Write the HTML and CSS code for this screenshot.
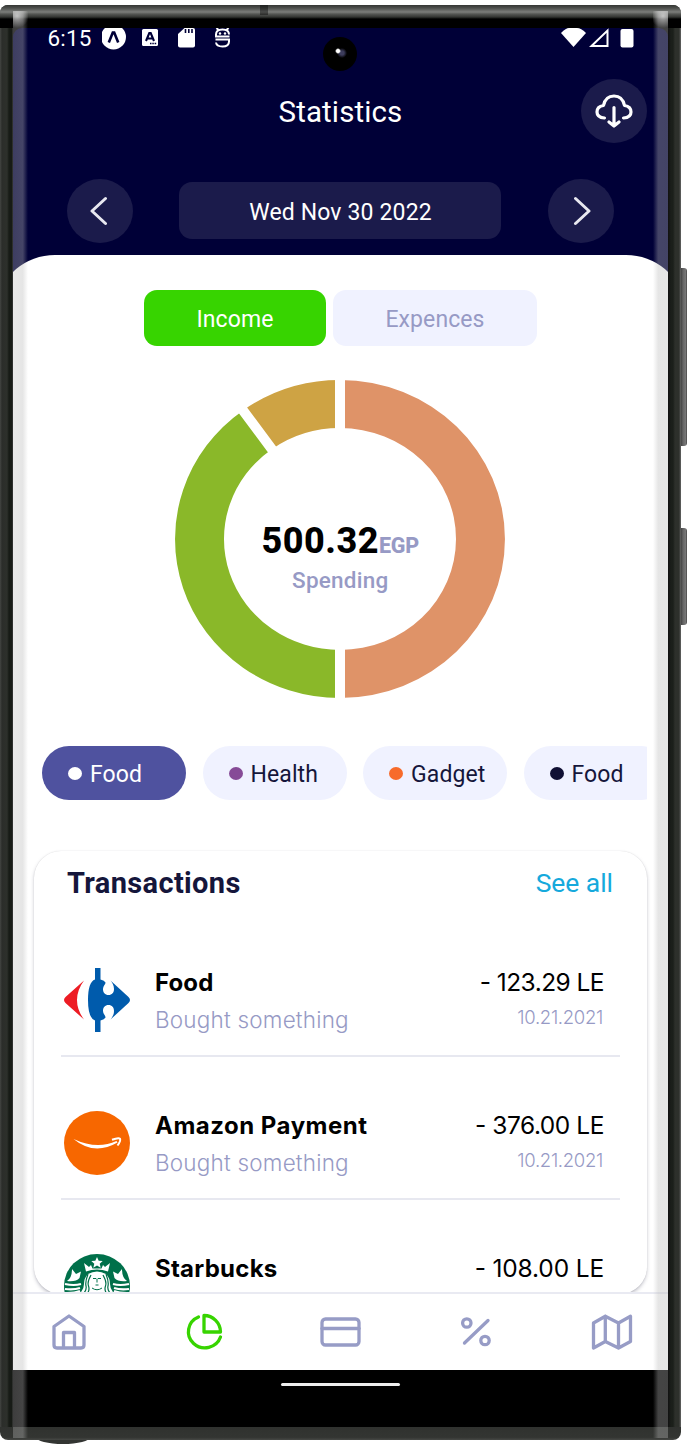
FILE: index.html
```html
<!DOCTYPE html>
<html lang="en">
<head>
<meta charset="utf-8">
<title>Statistics</title>
<link rel="stylesheet" href="styles.css">
</head>
<body>
<div class="stage">
  <span class="side-button volume"></span>
  <span class="side-button power"></span>
  <span class="stylus"></span>
  <div class="phone">
    <div class="top-edge"><span class="antenna"></span></div>
    <div class="screen">
      <header class="header">
        <div class="status">
          <span class="clock">6:15</span>
          <svg class="st-icons" width="130" height="23" viewBox="0 0 130 23">
            <circle cx="11.500" cy="9" r="12.500" fill="#fff"/>
            <path d="M6.800 14.500 10.800 4.500h1.400l4 10" fill="none" stroke="#000037" stroke-width="2.600"/>
            <rect x="40" y="1" width="16" height="17" rx="1.500" fill="#fff"/>
            <path d="M44 13 47.300 5h1.400l3.300 8M45.500 10.500h5" fill="none" stroke="#000037" stroke-width="2.100"/>
            <path d="M48 15.500h7" stroke="#000037" stroke-width="1.400" stroke-dasharray="1.500 .8"/>
            <path d="M82.500 0H91q2 0 2 2v15.500q0 2-2 2H78q-2 0-2-2V6z" fill="#fff"/>
            <path d="M83.500 1v4M86.800 1v4M90 1v4" stroke="#000037" stroke-width="1.600"/>
            <path d="M114.500 0l2 2M126.500 0l-2 2M127.500 8.500H114V6.500q0-5 6.500-5t6.500 5M113.500 11.500H127v2q0 5-6.500 5-6 0-6.500-4" fill="none" stroke="#fff" stroke-width="2"/>
            <circle cx="118" cy="5.500" r="1.200" fill="#fff"/><circle cx="123" cy="5.500" r="1.200" fill="#fff"/>
          </svg>
          <svg class="st-right" width="74" height="20" viewBox="0 0 74 20">
            <path d="M0 5Q5 0 8 0h8q4 0 9 5L12.500 19z" fill="#fff"/>
            <path d="M30.500 18 46.500 2.500V18z" fill="none" stroke="#fff" stroke-width="2"/>
            <rect x="59.500" y="1" width="13" height="18.500" rx="2" fill="#fff"/>
          </svg>
        </div>
        <div class="title-row">
          <h1 class="title">Statistics</h1>
          <button class="round download" aria-label="Download">
            <svg width="38" height="34" viewBox="0 0 38 34" fill="none" stroke="#fff" stroke-width="3.200" stroke-linecap="round" stroke-linejoin="round">
              <path d="M9.500 24Q2 23.500 2 18q0-5.500 6.500-6.500Q10.500 2 19 2t10.500 9.500Q36 12.500 36 18q0 5.500-7.500 6M19 13.500v18M14 28l5 4 5-4"/>
            </svg>
          </button>
        </div>
        <div class="date-row">
          <button class="round" aria-label="Previous day">
            <svg class="chev-left" width="18" height="30" viewBox="0 0 18 30"><path d="M15.500 2.500 2 15l13.500 12.500"/></svg>
          </button>
          <div class="date"><span class="date-text">Wed Nov 30 2022</span></div>
          <button class="round" aria-label="Next day">
            <svg class="chev-right" width="18" height="30" viewBox="0 0 18 30"><path d="M2.500 2.500 16 15 2.500 27.500"/></svg>
          </button>
        </div>
      </header>
      <main class="sheet">
        <div class="toggle">
          <button class="tab tab-on">Income</button>
          <button class="tab">Expences</button>
        </div>
        <div class="chart">
          <svg class="donut" width="330" height="318" viewBox="0 0 330 318" fill="none">
            <path d="M165 0A165 159 0 0 1 165 318V270A116 111 0 0 0 165 48z" fill="#df9368"/>
            <path d="M165 318A165 159 0 0 1 68 30.400L96.800 69.200A116 111 0 0 0 165 270z" fill="#8ab829"/>
            <path d="M68 30.400A165 159 0 0 1 165 0V48A116 111 0 0 0 96.800 69.200z" fill="#cea344"/>
            <path d="M165-2V60M165 258V320M64 25 103 77.500" stroke="#fff" stroke-width="10"/>
          </svg>
          <div class="total">
            <div class="amount">500.32<span class="currency">EGP</span></div>
            <div class="caption">Spending</div>
          </div>
        </div>
        <div class="chips">
          <span class="chip chip-on"><i class="dot"></i>Food</span>
          <span class="chip"><i class="dot purple"></i>Health</span>
          <span class="chip"><i class="dot orange"></i>Gadget</span>
          <span class="chip"><i class="dot navy"></i>Food</span>
        </div>
        <section class="card">
          <div class="card-head"><h2 class="card-title">Transactions</h2><a class="see-all">See all</a></div>
          <div class="item">
            <svg class="logo" width="66" height="64" viewBox="0 0 66 64">
              <path d="M20 12.500 1.500 29q-3 3 0 6L20 51.500Q13 42 13 32t7-19.500z" fill="#ed1c24"/>
              <path d="M31 0h5.500v11.500q4 1 5 3c.4 1.500-2.500 3.500-2.500 6.500 0 3.500 2 6 5.500 6s5.500-2.500 5.500-6c0-4-2-6.500-3.500-8.500L64.500 29q3 3 0 6L46.500 51.500C48 49.500 50 47 50 43c0-3.500-2-6-5.500-6S39 39.500 39 43c0 3 2.900 5 2.500 6.500q-1 2-5 3V64H31V52.500Q24 50 24 32t7-20.500z" fill="#005bac"/>
            </svg>
            <div class="info"><div class="name n1">Food</div><div class="note">Bought something</div></div>
            <div class="cost"><div class="price p1">- 123.29 LE</div><div class="day">10.21.2021</div></div>
          </div>
          <div class="item">
            <svg class="logo" width="66" height="64" viewBox="0 0 66 64">
              <ellipse cx="33" cy="32" rx="33" ry="32" fill="#f76700"/>
              <path d="M9.500 28Q33 39 52.500 30l1 1.600Q30 45 9.500 28z" fill="#fff"/>
              <path d="M48 28.800q6.500-2.500 8-1.100 1 2-2.500 6.800" fill="none" stroke="#fff" stroke-width="2"/>
            </svg>
            <div class="info"><div class="name n2">Amazon Payment</div><div class="note">Bought something</div></div>
            <div class="cost"><div class="price p2">- 376.00 LE</div><div class="day">10.21.2021</div></div>
          </div>
          <div class="item">
            <svg class="logo" width="66" height="64" viewBox="0 0 66 64">
              <ellipse cx="33" cy="32" rx="33" ry="32" fill="#00704a"/>
              <path d="M33 3l1.700 3.700 4 .3-3 2.700 1 4-3.700-2.200-3.700 2.200 1-4-3-2.700 4-.3zM20 9l5 4 2-2 1.500 3.500h9L39 11l2 2 5-4-2 8.500q-11-4-22 0z" fill="#fff"/>
              <path d="M24 20q9-5 18 0 4 4 4 10t5 10H15q5-4 5-10t4-10z" fill="#fff"/>
              <path d="M24 20q-3 8-2 12t-3 8M27 21q-4 7-2.500 11t-1.500 8M42 20q3 8 2 12t3 8M39 21q4 7 2.500 11t1.500 8" fill="none" stroke="#00704a" stroke-width="1.200"/>
              <path d="M29 24.500h3M34 24.500h3M33 24.500v4M31.500 31h3M28 34q5 3.500 10 0" stroke="#00704a" stroke-width="1" fill="none"/>
              <path d="M8 15l4 5 5-2.500-1.500 6.500Q12 28 3 27q5-3 5-12zM58 15l-4 5-5-2.500 1.500 6.500Q54 28 63 27q-5-3-5-12z" fill="#fff"/>
              <path d="M1 30q9 2 16 0M1 35q9 1 15-1M3 39q8 0 13-2M65 30q-9 2-16 0M65 35q-9 1-15-1M63 39q-8 0-13-2" fill="none" stroke="#fff" stroke-width="2.200"/>
            </svg>
            <div class="info"><div class="name n3">Starbucks</div></div>
            <div class="cost"><div class="price p3">- 108.00 LE</div></div>
          </div>
        </section>
      </main>
      <nav class="tabbar">
        <svg class="nav-icon" width="44" height="40" viewBox="0 0 44 40"><path d="M22 4 37 14.500V33q0 3-3 3H10q-3 0-3-3V14.500zM16.500 36V20.500h11V36"/></svg>
        <svg class="nav-icon active" width="44" height="40" viewBox="0 0 44 40"><path d="M15.500 5A16.500 16 0 1 0 37.500 25M21 3.500V20H37.500A16.500 16.500 0 0 0 21 3.500z"/></svg>
        <svg class="nav-icon" width="44" height="40" viewBox="0 0 44 40"><rect x="3" y="7" width="37" height="26" rx="3.500"/><path d="M3 16.500h37"/></svg>
        <svg class="nav-icon" width="44" height="40" viewBox="0 0 44 40"><circle cx="12.800" cy="11" r="4.200"/><circle cx="31" cy="28.500" r="4.200"/><path d="M10.500 31 34 8.500"/></svg>
        <svg class="nav-icon" width="44" height="40" viewBox="0 0 44 40"><path d="M3.500 11 15.300 4.200 28.500 11 40.500 4.200V29.500L28.500 36 15.300 29.500 3.500 36zM15.300 4.200V29.500M28.500 11V36"/></svg>
      </nav>
    </div>
    <div class="gesture"><span class="pill"></span></div>
    <span class="camera"></span>
    <span class="glare glare-left"></span>
    <span class="glare glare-right"></span>
  </div>
</div>
</body>
</html>
```
FILE: styles.css
```css
* { box-sizing: border-box; }
body { margin: 0; background: #fff; font-family: Roboto, "Liberation Sans", sans-serif; }
h1, h2 { margin: 0; font-weight: 400; }
button { border: 0; padding: 0; font: inherit; color: inherit; }
svg { display: block; flex: none; }

.stage { position: relative; width: 688px; height: 1445px; padding-top: 5px; overflow: hidden; }
.phone {
  position: relative; width: 681px; height: 1435px; padding: 0 13px; overflow: hidden;
  border-radius: 8px; display: flex; flex-direction: column;
  background:
    linear-gradient(#30322f, #333532 80%, #464845) bottom / 100% 13px no-repeat,
    linear-gradient(90deg, #444643 0, #2b2d2a 2px, #2d302b 7px, #171b16 9px, #171b16 12px, #444 13px) left / 13px 100% no-repeat,
    linear-gradient(90deg, #111 0, #1b1f1a 3px, #1b1f1a 5px, #2d302b 7px, #2d302b 11px, #666 13px) right / 13px 100% no-repeat,
    #000;
}
.side-button { position: absolute; left: 680px; width: 7px; border-radius: 0 3px 3px 0; background: linear-gradient(90deg, #333, #666 45%, #777 80%, #444); }
.volume { top: 268px; height: 178px; }
.power { top: 528px; height: 97px; }
.stylus { position: absolute; left: 36px; top: 1430px; width: 54px; height: 14px; border-radius: 0 0 50% 50%; background: #333532; }

.top-edge { flex: none; height: 23px; margin: 0 -13px; padding-left: 260px; background: linear-gradient(#343633 0, #4c4e4b 3px, #7c7e7b 7px, #555754 9px, #333532 12px, #000 14px); }
.antenna { display: block; width: 8px; height: 10px; background: rgba(0, 0, 0, .4); }

.screen { flex: none; height: 1342px; display: flex; flex-direction: column; overflow-x: clip; border-radius: 9px 9px 0 0; background: #000037; }
.header { flex: none; height: 227px; color: #fff; }
.status { height: 23px; padding: 0 33px 0 34.500px; display: flex; }
.clock { width: 54.500px; font-size: 22.500px; line-height: 21px; letter-spacing: .2px; }
.st-right { margin-left: auto; }
.title-row { height: 64px; margin-top: 28px; padding: 0 21px; display: grid; grid-template-columns: 66px 1fr 66px; align-items: center; }
.title { grid-column: 2; text-align: center; font-size: 29.500px; line-height: 34px; letter-spacing: .1px; padding-top: 2px; }
.round { width: 66px; height: 64px; border-radius: 50%; background: #1b1b4b; display: flex; align-items: center; justify-content: center; }
.download svg { margin-top: -1px; }
.date-row { display: flex; align-items: center; justify-content: space-between; height: 64px; margin-top: 36px; padding: 0 54px; }
.chev-left, .chev-right { fill: none; stroke: #e8e8f0; stroke-width: 3; stroke-linecap: round; stroke-linejoin: round; }
.chev-left { margin-right: 3px; }
.chev-right { margin-left: 2px; }
.date { width: 322px; height: 57px; margin: -1px 1px 0 0; border-radius: 13px; background: #1b1b4b; display: flex; align-items: center; justify-content: center; }
.date-text { font-size: 23px; line-height: 28px; letter-spacing: .15px; padding: 4px 0 0 1px; }

.sheet { flex: 1; min-height: 0; margin: 0 -13px; padding: 35px 34px 0; overflow: hidden; background: #fff; border-radius: 55px 55px 0 0 / 48px 48px 0 0; display: flex; flex-direction: column; }
.toggle { flex: none; height: 56px; padding-left: 110px; display: flex; gap: 7px; }
.tab { width: 204px; border-radius: 13px; background: #f0f2ff; color: #979ac5; font-size: 23px; letter-spacing: .1px; padding: 2px 0 0; }
.tab-on { width: 182px; background: #37d400; color: #fff; }
.chart { flex: none; width: 330px; margin: 34px 0 0 141.300px; display: grid; }
.donut, .total { grid-area: 1 / 1; }
.total { text-align: center; padding-top: 140px; color: #979ac5; }
.amount { font-size: 36px; line-height: 42px; font-weight: 800; color: #000; letter-spacing: .5px; white-space: nowrap; }
.currency { font-size: 21.500px; font-weight: 800; color: #979ac5; letter-spacing: -.2px; }
.caption { font-size: 22.500px; line-height: 28px; font-weight: 500; margin-top: -1px; letter-spacing: .25px; }
.chips { flex: none; margin: 48px 0 0; padding-left: 8px; display: flex; gap: 16.500px; height: 54px; overflow: hidden; }
.chip { flex: none; width: 144px; border-radius: 27px; padding: 2px 0 0 26px; display: flex; align-items: center; gap: 8px; background: #f0f2ff; color: #15163b; font-size: 23px; letter-spacing: .1px; }
.chip-on { background: #4f529f; color: #fff; }
.dot { width: 14px; height: 13px; margin-top: -2px; border-radius: 50%; background: #fff; }
.purple { background: #864b97; }
.orange { background: #f76b2b; }
.navy { background: #101034; }

.card { flex: none; height: 443px; margin-top: 51px; padding: 0 34px 0 33px; border-radius: 27px; background: #fff; box-shadow: 0 2px 4px -1px rgba(40, 40, 70, .4), 0 0 1px rgba(0, 0, 0, .15); overflow: hidden; }
.card-head { height: 82px; padding-top: 14px; display: flex; justify-content: space-between; }
.card-title { font-size: 29px; line-height: 36px; font-weight: 700; color: #15163b; letter-spacing: .35px; }
.see-all { font-size: 26.500px; line-height: 36px; color: #16a9dc; letter-spacing: -.05px; }
.item { height: 143px; margin: 0 -7px 0 -6px; padding: 34px 17px 0 3px; display: flex; border-bottom: 2px solid #e7e8f0; font-family: Inter, "Liberation Sans", sans-serif; }
.item:nth-child(2) { margin-top: -19px; }
.logo { margin-top: 20px; }
.info { padding-left: 25px; }
.name { margin-top: 20px; font-size: 24px; line-height: 30px; font-weight: 700; color: #000; white-space: nowrap; }
.n1 { letter-spacing: .1px; }
.n2 { letter-spacing: .5px; }
.n3 { letter-spacing: .25px; }
.note { margin-top: 8px; font-size: 22.500px; line-height: 28px; font-weight: 300; color: #979ac5; letter-spacing: .2px; }
.cost { margin-left: auto; text-align: right; }
.price { margin: 19px -1px 0 0; font-size: 24.500px; line-height: 30px; color: #000; }
.p1 { letter-spacing: -.55px; }
.p2 { letter-spacing: -.45px; }
.p3 { letter-spacing: -.15px; }
.day { margin-top: 7px; font-size: 18.500px; line-height: 26px; font-weight: 300; color: #979ac5; letter-spacing: -.3px; }

.tabbar { position: relative; flex: none; height: 78px; padding: 0 34px; border-top: 2px solid #e9eaf2; background: #fff; display: flex; align-items: center; justify-content: space-between; }
.nav-icon { fill: none; stroke: #979cc6; stroke-width: 3.300; stroke-linecap: round; stroke-linejoin: round; }
.active { stroke: #37d400; }

.gesture { flex: none; height: 57px; display: flex; justify-content: center; padding-top: 13px; }
.pill { width: 119px; height: 3px; border-radius: 2px; background: #eee; }
.camera { position: absolute; left: 323px; top: 32px; width: 34px; height: 34px; border-radius: 50%; background: radial-gradient(circle at 15px 14px, #fff 0 1.500px, transparent 3px), radial-gradient(circle at 19px 16px, #3c3c5c 0 2px, transparent 5px), #000; }
.glare { position: absolute; top: 6px; bottom: 2px; width: 15px; }
.glare-left { left: 13px; background: radial-gradient(circle at 4px 5px, rgba(255, 255, 255, .6), transparent 12px), linear-gradient(90deg, rgba(186, 186, 186, .33), rgba(186, 186, 186, .37) 65%, transparent); }
.glare-right { right: 13px; background: radial-gradient(circle at 10px 5px, rgba(255, 255, 255, .6), transparent 12px), linear-gradient(270deg, rgba(186, 186, 186, .36), rgba(186, 186, 186, .37) 65%, transparent); }
```
